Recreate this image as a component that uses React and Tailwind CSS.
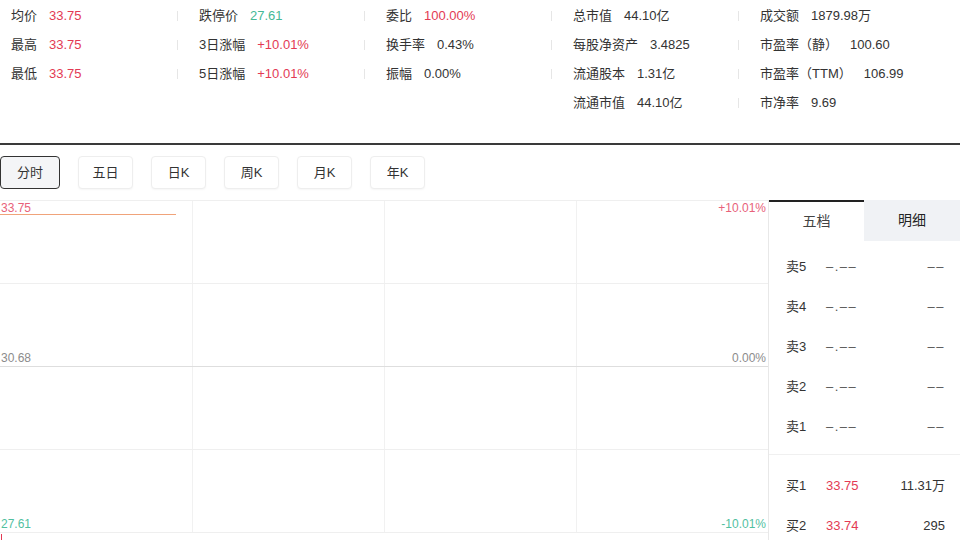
const RED = "text-[#e33a54]";
const GREEN = "text-[#45b996]";

const stats = [
  [
    { label: "均价", value: "33.75", tone: RED },
    { label: "最高", value: "33.75", tone: RED },
    { label: "最低", value: "33.75", tone: RED },
  ],
  [
    { label: "跌停价", value: "27.61", tone: GREEN },
    { label: "3日涨幅", value: "+10.01%", tone: RED },
    { label: "5日涨幅", value: "+10.01%", tone: RED },
  ],
  [
    { label: "委比", value: "100.00%", tone: RED },
    { label: "换手率", value: "0.43%" },
    { label: "振幅", value: "0.00%" },
  ],
  [
    { label: "总市值", value: "44.10亿" },
    { label: "每股净资产", value: "3.4825" },
    { label: "流通股本", value: "1.31亿" },
    { label: "流通市值", value: "44.10亿", noDivider: true },
  ],
  [
    { label: "成交额", value: "1879.98万" },
    { label: "市盈率（静）", value: "100.60" },
    { label: "市盈率（TTM）", value: "106.99" },
    { label: "市净率", value: "9.69" },
  ],
];

const periods = ["分时", "五日", "日K", "周K", "月K", "年K"];

const sells = ["卖5", "卖4", "卖3", "卖2", "卖1"];
const buys = [
  { label: "买1", price: "33.75", vol: "11.31万" },
  { label: "买2", price: "33.74", vol: "295" },
];

function StatColumn({ items, first }) {
  return (
    <div className={first ? "w-[177px] shrink-0" : "w-[187px] shrink-0"}>
      {items.map((it) => (
        <div key={it.label} className="h-[29px] flex items-center">
          {!first && (
            <span className={it.noDivider ? "w-px h-[10px]" : "w-px h-[10px] bg-[#e6e6e6]"} />
          )}
          <span className={first ? "pl-[11px] text-[#333]" : "pl-[21px] text-[#333]"}>{it.label}</span>
          <span className={`ml-[12px] ${it.tone || "text-[#333]"}`}>{it.value}</span>
        </div>
      ))}
    </div>
  );
}

function PriceChart() {
  return (
    <div className="relative w-[768px] shrink-0">
      <div className="border-t border-[#efefef]">
        {[0, 1, 2, 3].map((r) => (
          <div
            key={r}
            className={
              r === 1
                ? "grid grid-cols-4 h-[83px] border-b border-[#dedede]"
                : "grid grid-cols-4 h-[83px] border-b border-[#efefef]"
            }
          >
            <div />
            <div className="border-l border-[#f1f1f1]" />
            <div className="border-l border-[#f1f1f1]" />
            <div className="border-l border-[#f1f1f1]" />
          </div>
        ))}
      </div>

      {/* axis labels over the grid */}
      <span className="absolute left-[1px] top-[1px] text-[12px] leading-[14px] text-[#e8627a]">33.75</span>
      <span className="absolute left-0 top-[14px] w-[176px] h-px bg-[#f0a37a]" />
      <span className="absolute right-[2px] top-[1px] text-[12px] leading-[14px] text-[#e8627a]">+10.01%</span>
      <span className="absolute left-[1px] top-[151px] text-[12px] leading-[14px] text-[#8c8c8c]">30.68</span>
      <span className="absolute right-[2px] top-[151px] text-[12px] leading-[14px] text-[#8c8c8c]">0.00%</span>
      <span className="absolute left-[1px] top-[317px] text-[12px] leading-[14px] text-[#52bf9f]">27.61</span>
      <span className="absolute right-[2px] top-[317px] text-[12px] leading-[14px] text-[#52bf9f]">-10.01%</span>
      <span className="absolute left-[1px] top-[334px] w-px h-[8px] bg-[#e33a54]" />
    </div>
  );
}

function OrderBook() {
  return (
    <div className="flex-1 border-l border-[#e8e8e8] text-[13px]">
      <div className="flex h-[41px]">
        <div className="w-[95px] flex items-center justify-center border-t-2 border-[#222] bg-white text-[14px] text-[#444]">
          五档
        </div>
        <div className="flex-1 flex items-center justify-center bg-[#f0f2f5] text-[14px] text-[#222]">
          明细
        </div>
      </div>
      <div className="pt-[6px]">
        {sells.map((s) => (
          <div key={s} className="h-[40px] flex items-center pl-[17px] pr-[15px] text-[#333]">
            <span className="w-[40px]">{s}</span>
            <span className="text-[#555] tracking-[1.5px]">–.––</span>
            <span className="ml-auto text-[#555] tracking-[1.5px]">––</span>
          </div>
        ))}
      </div>
      <div className="mt-[7px] border-t border-[#f0f0f0] pt-[11px]">
        {buys.map((b) => (
          <div key={b.label} className="h-[40px] flex items-center pl-[17px] pr-[15px] text-[#333]">
            <span className="w-[40px]">{b.label}</span>
            <span className={RED}>{b.price}</span>
            <span className="ml-auto">{b.vol}</span>
          </div>
        ))}
      </div>
    </div>
  );
}

export default function App() {
  return (
    <div
      className="w-[960px] h-[540px] overflow-hidden bg-white text-[13px]"
      style={{ fontFamily: '"Liberation Sans", "Noto Sans CJK SC", sans-serif' }}
    >
      <div className="h-[143px] pt-[1px] flex">
        {stats.map((col, i) => (
          <StatColumn key={i} items={col} first={i === 0} />
        ))}
      </div>
      <div className="h-[2px] bg-[#3a3a3a]" />

      <div className="mt-[11px] flex gap-[18px]">
        {periods.map((p, i) => (
          <button
            key={p}
            className={
              i === 0
                ? "w-[60px] h-[33px] rounded-[4px] border border-[#333] bg-[#f4f5f7] text-[13px] text-[#333]"
                : "w-[55px] h-[33px] rounded-[4px] border border-[#eeeeee] bg-white text-[13px] text-[#333] shadow-[0_1px_2px_rgba(0,0,0,0.04)]"
            }
          >
            {p}
          </button>
        ))}
      </div>

      <div className="mt-[11px] flex">
        <PriceChart />
        <OrderBook />
      </div>
    </div>
  );
}
